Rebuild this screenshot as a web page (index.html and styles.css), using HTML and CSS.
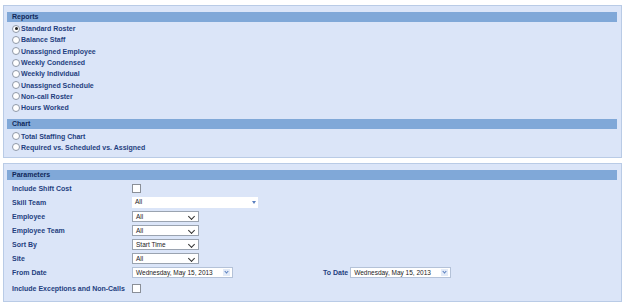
FILE: index.html
```html
<!DOCTYPE html>
<html>
<head>
    <title>Reports</title>
    <meta charset="utf-8">
    <link rel="stylesheet" href="styles.css">
</head>
<body>

    <section class="panel reports">
        <h2 class="bar">Reports</h2>
        <ul class="opts">
            <li><span class="radio on"></span>Standard Roster</li>
            <li><span class="radio"></span>Balance Staff</li>
            <li><span class="radio"></span>Unassigned Employee</li>
            <li><span class="radio"></span>Weekly Condensed</li>
            <li><span class="radio"></span>Weekly Individual</li>
            <li><span class="radio"></span>Unassigned Schedule</li>
            <li><span class="radio"></span>Non-call Roster</li>
            <li><span class="radio"></span>Hours Worked</li>
        </ul>
        <h2 class="bar chart">Chart</h2>
        <ul class="opts">
            <li><span class="radio"></span>Total Staffing Chart</li>
            <li><span class="radio"></span>Required vs. Scheduled vs. Assigned</li>
        </ul>
    </section>

    <section class="panel params">
        <h2 class="bar">Parameters</h2>
        <div class="grid">
            <label>Include Shift Cost</label>
            <div><span class="check"></span></div>

            <label>Skill Team</label>
            <div><span class="combo wide">All<i class="arrow"></i></span></div>

            <label>Employee</label>
            <div><span class="select">All<i class="chev"></i></span></div>

            <label>Employee Team</label>
            <div><span class="select">All<i class="chev"></i></span></div>

            <label>Sort By</label>
            <div><span class="select">Start Time<i class="chev"></i></span></div>

            <label>Site</label>
            <div><span class="select">All<i class="chev"></i></span></div>

            <label>From Date</label>
            <div class="dates">
                <span class="combo date">Wednesday, May 15, 2013<i class="arrow blue"></i></span>
                <span class="to">To Date</span>
                <span class="combo date">Wednesday, May 15, 2013<i class="arrow blue"></i></span>
            </div>

            <label class="last">Include Exceptions and Non-Calls</label>
            <div class="last"><span class="check"></span></div>
        </div>
    </section>

</body>
</html>
```

FILE: styles.css
```css
body {
    margin: 0;
    padding: 5px 6px 0 3px;
    background: white;
    font-family: "Liberation Sans", Arial, sans-serif;
    font-size: 7px;
    font-weight: bold;
    color: #1f3f80;
}

.panel {
    background: #dbe5f8;
    border: 1px solid #b9cbe6;
    padding: 6px 4px 0 3px;
    box-sizing: border-box;
}

.reports {
    height: 153px;
}

.params {
    margin-top: 5px;
    height: 139px;
}

.bar {
    margin: 0;
    height: 10px;
    line-height: 10px;
    background: #80a8d8;
    color: #10285a;
    font-size: 7px;
    padding-left: 5px;
}

.chart {
    margin-top: 6px;
}

.opts {
    list-style: none;
    margin: 1px 0 0;
    padding: 0 0 0 5px;
}

.opts li {
    height: 11.3px;
    display: flex;
    align-items: center;
    white-space: nowrap;
}

.radio {
    width: 6px;
    height: 6px;
    border: 1px solid #8f98a8;
    border-radius: 50%;
    background: white;
    margin-right: 1px;
    display: flex;
    align-items: center;
    justify-content: center;
}

.radio.on::after {
    content: "";
    width: 3px;
    height: 3px;
    border-radius: 50%;
    background: #222;
}

.grid {
    display: grid;
    grid-template-columns: 120px 1fr;
    grid-auto-rows: 14px;
    align-items: center;
    padding: 1px 0 0 5px;
    white-space: nowrap;
}

.grid .last {
    margin-top: 4px;
}

.check {
    display: block;
    width: 7px;
    height: 7px;
    border: 1px solid #8a8f98;
    background: white;
}

.select,
.combo {
    position: relative;
    display: block;
    box-sizing: border-box;
    height: 11px;
    line-height: 10px;
    padding-left: 3px;
    background: white;
    color: #222;
    font-weight: normal;
    font-size: 6.5px;
}

.select {
    width: 67px;
    border: 1px solid #9aa3b0;
}

.combo.wide {
    width: 126px;
}

.combo.date {
    width: 101px;
    border: 1px solid #b4c2d8;
}

.chev {
    position: absolute;
    right: 4px;
    top: 2px;
    width: 4px;
    height: 4px;
    border-right: 1.5px solid #333;
    border-bottom: 1.5px solid #333;
    transform: rotate(45deg);
}

.arrow {
    position: absolute;
    right: 2px;
    top: 4px;
    border-left: 2.5px solid transparent;
    border-right: 2.5px solid transparent;
    border-top: 3px solid #5a7fbf;
}

.arrow.blue {
    right: 2px;
    top: 1px;
    width: 7px;
    height: 7px;
    border: 0;
    background: #e3ebf8;
}

.arrow.blue::after {
    content: "";
    position: absolute;
    left: 2px;
    top: 1px;
    width: 2px;
    height: 2px;
    border-right: 1px solid #5a7fbf;
    border-bottom: 1px solid #5a7fbf;
    transform: rotate(45deg);
}

.dates {
    display: flex;
    align-items: center;
}

.to {
    margin: 0 2px 0 90px;
}
```
